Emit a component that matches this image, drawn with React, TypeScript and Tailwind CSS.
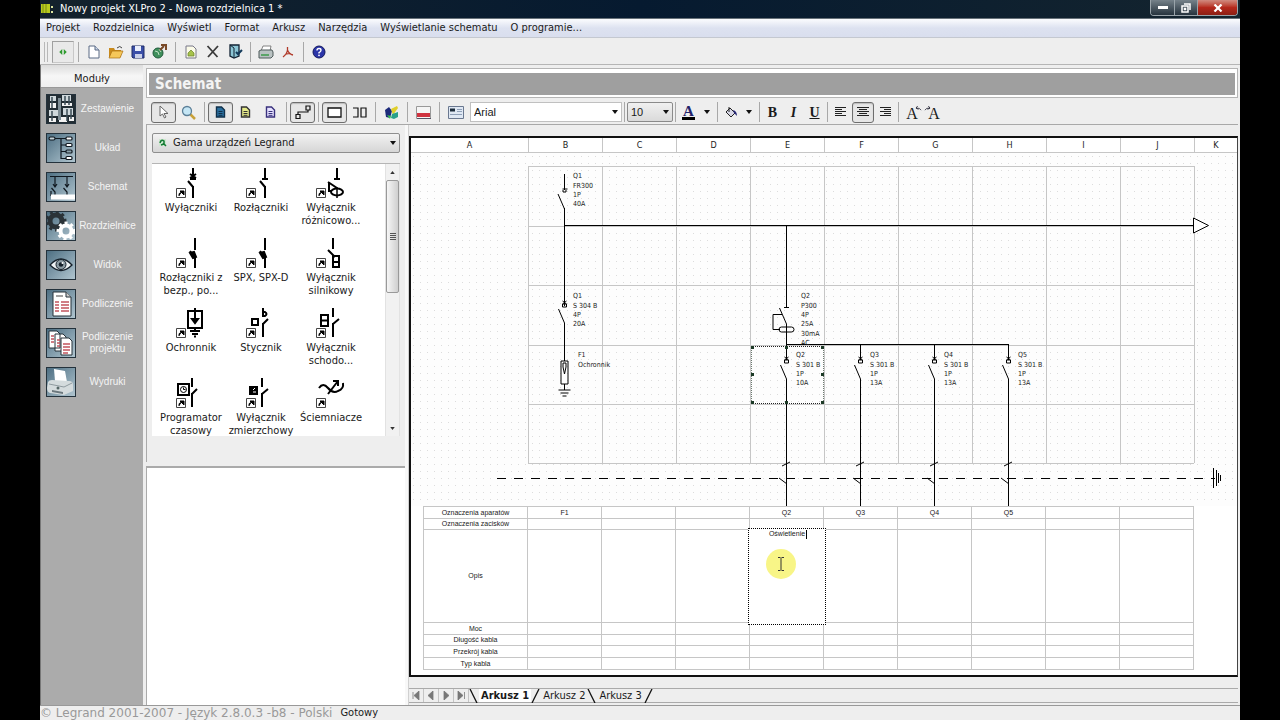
import React, { useState } from 'react';
import clsx from 'clsx';

const menuItems = [
  'Projekt',
  'Rozdzielnica',
  'Wyświetl',
  'Format',
  'Arkusz',
  'Narzędzia',
  'Wyświetlanie schematu',
  'O programie...',
];

const columns = ['B', 'C', 'D', 'E', 'F', 'G', 'H', 'I', 'J'];

// sheet geometry
const COL_START = 118;
const COL_W = 74;
const rowLines = [13, 73, 132, 192, 251, 310];
const labelOffsets = [0, 10, 19, 28, 38, 47];

type TableRow = {
  label: string;
  height: string;
  cells?: Record<string, string>;
};

const tableRows: TableRow[] = [
  { label: 'Oznaczenia aparatów', height: 'h-[12px]', cells: { B: 'F1', E: 'Q2', F: 'Q3', G: 'Q4', H: 'Q5' } },
  { label: 'Oznaczenia zacisków', height: 'h-[11px]' },
  { label: 'Opis', height: 'h-[93px]' },
  { label: 'Moc', height: 'h-[12px]' },
  { label: 'Długość kabla', height: 'h-[11px]' },
  { label: 'Przekrój kabla', height: 'h-[12px]' },
  { label: 'Typ kabla', height: 'h-[12px]' },
];

/* ---------- small helpers ---------- */

const Sep = ({ className = 'mx-[3px]' }: { className?: string }) => (
  <span className={clsx('h-5 w-px shrink-0 bg-[#a8a8a8]', className)} />
);

type ToolProps = {
  label: string;
  pressed?: boolean;
  width?: string;
  children: React.ReactNode;
};

const Tool = ({ label, pressed, width = 'w-[25px]', children }: ToolProps) => (
  <button
    aria-label={label}
    title={label}
    className={clsx(
      'flex h-[21px] shrink-0 items-center justify-center rounded-[3px] border',
      width,
      pressed ? 'border-[#6e6e6e] bg-[#e6e6e6] shadow-[inset_0_1px_1px_#bbb]' : 'border-transparent'
    )}
  >
    {children}
  </button>
);

const Arrow = () => (
  <svg width="6" height="4" viewBox="0 0 6 4" fill="#111">
    <path d="M0 0h6L3 4z" />
  </svg>
);

type SelectProps = {
  label: string;
  options: string[];
  width: string;
  className: string;
};

const SelectBox = ({ label, options, width, className }: SelectProps) => (
  <div className={clsx('relative flex shrink-0 items-center', width)}>
    <select aria-label={label} className={clsx('h-[20px] w-full appearance-none border outline-none', className)}>
      {options.map((o) => (
        <option key={o}>{o}</option>
      ))}
    </select>
    <span className="pointer-events-none absolute right-[4px]">
      <Arrow />
    </span>
  </div>
);

const PageIcon = ({ fill, stroke }: { fill: string; stroke: string }) => (
  <svg width="11" height="12" viewBox="0 0 11 12">
    <path d="M1.5 1h5l3 3v7h-8z" fill={fill} stroke={stroke} strokeWidth="1.4" />
    <path d="M3.5 5.5h4M3.5 7.5h4M3.5 9.3h4" stroke={stroke} />
  </svg>
);

const AlignIcon = ({ d }: { d: string }) => (
  <svg width="12" height="12" viewBox="0 0 12 12" stroke="#222" strokeWidth="1">
    <path d={d} />
  </svg>
);

/* ---------- module icons ---------- */

const moduleList = [
  {
    name: 'Zestawienie',
    icon: (
      <>
        <rect width="30" height="30" fill="#222d34" />
        <path d="M4 2h6v5H4zM16 1h9v6h-9zM3 16h9v6H3zM17 14h10v7H17z" fill="#cfd8dc" />
        <path d="M4 9h6v5H4zM16 9h10v3H16zM13 23h8v5h-8zM3 24h7v4H3zM23 23h5v4h-5z" fill="#f2f2f2" />
        <path d="M6 3v11M19 2v9M23 2v9M6 17v10M21 15v12M25 15v10" stroke="#3c4c55" strokeWidth="1.5" />
        <path d="M12 4h3v22h-3z" fill="#7e8d95" />
      </>
    ),
  },
  {
    name: 'Układ',
    icon: (
      <g fill="none" stroke="#101820" strokeWidth="1.2">
        <path d="M9 5.5h11M15 5.5v20h5M15 12h5M15 18.5h5" />
        <rect x="3" y="4" width="6" height="3" rx="1.5" fill="#c5d2d8" />
        <rect x="20" y="4" width="6" height="3" rx="1" fill="#fff" />
        <rect x="20" y="10.5" width="6" height="3" rx="1" fill="#fff" />
        <rect x="20" y="17" width="6" height="3" rx="1" fill="#8ca2ad" />
        <rect x="20" y="23.5" width="6" height="3" rx="1" fill="#fff" />
      </g>
    ),
  },
  {
    name: 'Schemat',
    icon: (
      <g fill="none" stroke="#101820" strokeWidth="1.2">
        <path d="M4 4.500h23M9 5v10M7 12l2 3 2-3M5.500 16l3.500 4v3M21 5v10M19 12l2 3 2-3M17.500 16l3.500 4v3M5 19v5" />
        <rect x="5" y="22.500" width="24" height="5" fill="#fff" stroke="none" />
      </g>
    ),
  },
  {
    name: 'Rozdzielnice',
    icon: (
      <>
        <circle cx="10" cy="10" r="6" fill="none" stroke="#2b3338" strokeWidth="5" />
        <circle cx="10" cy="10" r="9" fill="none" stroke="#2b3338" strokeWidth="3" strokeDasharray="3 3" />
        <circle cx="20" cy="20" r="5.500" fill="none" stroke="#fff" strokeWidth="4" />
        <circle cx="20" cy="20" r="8" fill="none" stroke="#fff" strokeWidth="3" strokeDasharray="3 3" />
      </>
    ),
  },
  {
    name: 'Widok',
    icon: (
      <>
        <path d="M4 15Q15 3 26 15Q15 26 4 15z" fill="#eef2f4" stroke="#15202a" strokeWidth="1.3" />
        <circle cx="15" cy="14.500" r="5" fill="#8b9aa2" stroke="#15202a" />
        <circle cx="15" cy="14.500" r="2.300" fill="#15202a" />
        <circle cx="16.500" cy="13" r="1" fill="#fff" />
      </>
    ),
  },
  {
    name: 'Podliczenie',
    icon: (
      <>
        <path d="M7 3h13l5 5v19H7z" fill="#fff" stroke="#26323a" />
        <path d="M20 3v5h5" fill="#ccc" stroke="#26323a" />
        <path d="M10 7h7" stroke="#444" />
        <path d="M9 13h4M15 13h8M9 16h4M15 16h8M9 19h4M15 19h8M9 22h4M15 22h8" stroke="#c2545e" strokeWidth="1.500" />
      </>
    ),
  },
  {
    name: 'Podliczenie projektu',
    icon: (
      <>
        <path d="M3 3h8l3 3v14H3zM9 6h8l3 3v14H9z" fill="#fff" stroke="#26323a" />
        <path d="M15 10h8l3 3v14H15z" fill="#fff" stroke="#26323a" />
        <path d="M5 8h3M5 11h3M5 14h3M11 12h3M11 15h3M11 18h3M17 16h7M17 19h7M17 22h7M17 25h5" stroke="#c2545e" strokeWidth="1.300" />
      </>
    ),
  },
  {
    name: 'Wydruki',
    icon: (
      <>
        <path d="M8 2l11 2 2 11-12-1z" fill="#fff" />
        <path d="M2 15q1-2 4-2l17 1q4 0 4 4v6l-9 4-14-2q-3-1-3-5z" fill="#d4dbdd" />
        <path d="M3 17l15 3 8-4" stroke="#8f9a9f" fill="none" />
        <path d="M6 23l11 2v2L6 25z" fill="#6b777d" />
        <circle cx="12" cy="21" r="1.500" fill="#566" />
      </>
    ),
  },
];

/* ---------- device library ---------- */

const library = [
  { name: 'Wyłączniki', art: <path d="M37 1v12M34 12h6M34 7l6 4M40 7l-6 4M32 14l5 6M37 19v12" /> },
  { name: 'Rozłączniki', art: <path d="M39 1v11M36 12h6M34 14l5 6M39 19v12" /> },
  {
    name: 'Wyłącznik różnicowo...',
    art: (
      <>
        <path d="M41 1v11M38 12h6M32 15l9 6M33 15v9h3" />
        <ellipse cx="41" cy="25" rx="6" ry="3.500" />
        <path d="M41 20v11" strokeWidth="1.500" />
      </>
    ),
  },
  {
    name: 'Rozłączniki z bezp., po...',
    art: (
      <>
        <path d="M39 1v12M34 14l5 7M39 20v11" />
        <path d="M34 16l4-1 2 5-3 1z" fill="#000" />
      </>
    ),
  },
  {
    name: 'SPX, SPX-D',
    art: (
      <>
        <path d="M39 1v12M34 14l5 7M39 20v11" />
        <path d="M34 16l4-1 2 5-3 1z" fill="#000" />
      </>
    ),
  },
  { name: 'Wyłącznik silnikowy', art: <path d="M37 1v11M32 13l7 7M37 19v11h6V19zM37 25h6" /> },
  {
    name: 'Ochronnik',
    art: (
      <>
        <path d="M32 4h14v17H32zM39 1v12M39 21v3M34 24h10M36 27h6M38 29.500h2" />
        <path d="M36 12h6l-3 4z" fill="#000" />
      </>
    ),
  },
  { name: 'Stycznik', art: <path d="M37 1v9M37 5h2q3 2 0 4h-2M42 12l-5 5M37 16v14M26 12h6v6h-6z" /> },
  { name: 'Wyłącznik schodo...', art: <path d="M37 1v9M43 12l-6 5M37 16v14M25 8h7v11h-7zM25 13.500h7" /> },
  {
    name: 'Programator czasowy',
    art: (
      <>
        <path d="M36 1v9M41 12l-5 5M36 16v14M22 7h11v11H22z" />
        <circle cx="27.500" cy="12.500" r="3" strokeWidth="1" />
        <path d="M27.500 10.500v2h2" strokeWidth="1" />
      </>
    ),
  },
  {
    name: 'Wyłącznik zmierzchowy',
    art: (
      <>
        <path d="M36 1v9M42 12l-6 5M36 16v14" />
        <path d="M24 10h7v7h-7z" fill="#000" />
        <path d="M27 13l2-2M27 15h3" stroke="#fff" strokeWidth="1" />
      </>
    ),
  },
  { name: 'Ściemniacze', art: <path d="M23 11q4-6 9 0t10 3q6-2 5-8M32 17l10-13M37 4h5v5" /> },
];

/* ---------- schematic symbols ---------- */

const Labels = ({ x, y, lines }: { x: number; y: number; lines: string[] }) => (
  <g fill="#222" stroke="none">
    {lines.map((line, i) => (
      <text key={i} x={x} y={y + labelOffsets[i]}>
        {line}
      </text>
    ))}
  </g>
);

// open blade with a small square contact on top of it
const Breaker = ({ x, y }: { x: number; y: number }) => (
  <g>
    <path d={`M${x - 2} ${y - 5}l4 3M${x + 2} ${y - 5}l-4 3M${x - 2} ${y - 2}h4v3h-4z`} fill="none" />
    <path d={`M${x - 6} ${y + 3}L${x} ${y + 17}`} />
  </g>
);

const feeders = [
  { x: 377, name: 'Q2', amps: '10A' },
  { x: 451, name: 'Q3', amps: '13A' },
  { x: 525, name: 'Q4', amps: '13A' },
  { x: 599, name: 'Q5', amps: '13A' },
];

const Schematic = () => (
  <svg
    width="828"
    height="353"
    viewBox="0 0 828 353"
    className="block shrink-0 font-['DejaVu_Sans_Condensed','Noto_Sans',sans-serif] text-[7px]"
    role="img"
    aria-label="Schemat rozdzielnicy"
  >
    <defs>
      <pattern id="dots" width="7" height="7" patternUnits="userSpaceOnUse">
        <rect x="3" y="3" width="1" height="1" fill="#dcdcdc" />
      </pattern>
    </defs>
    <rect width="828" height="353" fill="#fdfdfd" />
    <rect width="828" height="353" fill="url(#dots)" />

    {/* grid */}
    <g stroke="#c6c6c6" shapeRendering="crispEdges">
      {rowLines.map((y) => (
        <path key={y} d={`M118 ${y + 0.5}H784`} />
      ))}
      {[...columns, 'K'].map((c, i) => (
        <path key={c} d={`M${COL_START + i * COL_W + 0.5} 13V310`} />
      ))}
    </g>

    <g stroke="#000" fill="none">
      {/* main feed */}
      <g shapeRendering="crispEdges">
        <path d="M154.500 21v16M154.500 55v98M154.500 170v38M154.500 72.500H783" />
        <path d="M376.500 73v81M376.500 171v20M376.500 191.500H599" />
      </g>
      <path d="M152.500 36h5M153 37v2h3v-2M148 41l6.500 15" />
      <path d="M783.500 65v15l15-7.500z" fill="#fff" />
      <Breaker x={154.5} y={153} />

      {/* surge arrester */}
      <path d="M151 208h7v23h-7zM154.500 231v6M148.500 237h12M150.500 240h8M152.500 243h4M153 214v-4h3v4M153 214l1.500 7 1.500-7" />

      {/* residual current switch */}
      <path d="M374 154.500h5M369.500 155l7 16M372 161.500h-9v15h7" />
      <rect x="369" y="174" width="15" height="5" rx="2.500" />

      {feeders.map((f) => (
        <g key={f.x}>
          <path d={`M${f.x - 0.5} 191v16M${f.x - 0.5} 226v127`} shapeRendering="crispEdges" />
          <Breaker x={f.x - 0.5} y={209} />
          <path d={`M${f.x - 5} 313l8-4M${f.x - 8} 325l8 6`} />
        </g>
      ))}

      <path d="M87 325.500h718" strokeDasharray="9 8" shapeRendering="crispEdges" />
      <path d="M803.500 315v20M806.500 317v16M808.500 320v10M810.500 322v6" />
    </g>

    {/* selection frame */}
    <g fill="none" stroke="#222">
      <path d="M341 193.500h73M341 250.500h73" strokeDasharray="1 1" shapeRendering="crispEdges" />
      <path d="M341.500 193v58M413.500 193v58" stroke="#6d7a70" strokeDasharray="1 1" shapeRendering="crispEdges" />
      {[341, 375, 411].map((x) =>
        [193, 220, 248].map((y) =>
          x === 375 && y === 220 ? null : <rect key={`${x}-${y}`} x={x} y={y} width="3" height="3" fill="#1c3a26" stroke="none" />
        )
      )}
    </g>

    <Labels x={163} y={25} lines={['Q1', 'FR300', '1P', '40A']} />
    <Labels x={163} y={145} lines={['Q1', 'S 304 B', '4P', '20A']} />
    <Labels x={168} y={204} lines={['F1', 'Ochronnik']} />
    <Labels x={391} y={145} lines={['Q2', 'P300', '4P', '25A', '30mA', 'AC']} />
    {feeders.map((f) => (
      <Labels key={f.x} x={f.x + 9} y={204} lines={[f.name, 'S 301 B', '1P', f.amps]} />
    ))}
  </svg>
);

const DescriptionTable = () => {
  const [text, setText] = useState('Oświetlenie');

  return (
    <table className="ml-[13px] w-[770px] table-fixed border-collapse bg-white text-center font-['Liberation_Sans',Arial,sans-serif] text-[7px] leading-[8px] text-[#222]">
      <colgroup>
        <col className="w-[104px]" />
        {columns.map((c) => (
          <col key={c} className="w-[74px]" />
        ))}
      </colgroup>
      <tbody>
        {tableRows.map((row) => (
          <tr key={row.label} className={row.height}>
            <th scope="row" className="border border-[#c6c6c6] p-0 font-normal">
              {row.label}
            </th>
            {columns.map((c) => (
              <td key={c} className="relative border border-[#c6c6c6] p-0">
                {row.label === 'Opis' && c === 'E' ? (
                  <>
                    <textarea
                      aria-label="Opis E"
                      value={text}
                      spellCheck={false}
                      onChange={(e) => setText(e.target.value)}
                      className="absolute -inset-[2px] h-[97px] w-[78px] resize-none border border-dotted border-black bg-white pt-px text-center outline-none"
                    />
                    <span className="absolute left-1/2 top-0 ml-[19px] h-[9px] w-px bg-black" />
                  </>
                ) : (
                  row.cells?.[c]
                )}
              </td>
            ))}
          </tr>
        ))}
      </tbody>
    </table>
  );
};

/* ---------- toolbars ---------- */

const MainToolbar = () => {
  const w = 'w-[22px]';
  return (
    <div className="flex h-[27px] shrink-0 items-center border-b border-[#b5b5b5] bg-[#eeeeee] pl-1 pt-px">
      <span className="h-5 w-1 border-x border-[#b8b8b8]" />
      <span className="w-1" />
      <button
        aria-label="Moduły"
        className="flex h-[22px] w-[22px] items-center justify-center border border-[#c8c8c8] border-l-[#a0a0a0] border-t-[#a0a0a0] bg-[#e9e9e9]"
      >
        <svg width="8" height="6" viewBox="0 0 10 8" fill="#2f9b2f">
          <path d="M4 0v8L0 4zM6 0v8l4-4z" />
        </svg>
      </button>
      <Sep className="mx-1" />
      <Tool label="Nowy" width={w}>
        <svg width="12" height="14" viewBox="0 0 12 14">
          <path d="M1 1h6l4 4v8H1z" fill="#fff" stroke="#5b6b85" />
          <path d="M7 1v4h4" fill="#c9d4e6" stroke="#5b6b85" />
        </svg>
      </Tool>
      <Tool label="Otwórz" width={w}>
        <svg width="16" height="14" viewBox="0 0 16 14">
          <path d="M1 12V3h5l1 2h6v7z" fill="#c98a1c" />
          <path d="M1 13l3-7h11l-3 7z" fill="#f5c75a" stroke="#a86d10" strokeWidth="0.700" />
          <path d="M9 3q3-3 5 0" fill="none" stroke="#444" />
        </svg>
      </Tool>
      <Tool label="Zapisz" width={w}>
        <svg width="14" height="14" viewBox="0 0 14 14">
          <path d="M1 1h12v12H2l-1-1z" fill="#3b4fa8" stroke="#1f2c66" />
          <path d="M4 1h6v5H4z" fill="#e9eefb" />
          <path d="M4 9h7v4H4z" fill="#c9d0e8" />
        </svg>
      </Tool>
      <Tool label="Eksport" width={w}>
        <svg width="16" height="15" viewBox="0 0 16 15">
          <circle cx="6" cy="9" r="5" fill="#3f8f5b" stroke="#1f5a3a" />
          <path d="M3 7l3 1 1 3M7 5l2 3" stroke="#bfe0c4" fill="none" />
          <path d="M8 6l4-4M9 1h5v5" stroke="#7a4a28" strokeWidth="2" fill="none" />
        </svg>
      </Tool>
      <Sep className="mx-1" />
      <Tool label="Właściwości" width={w}>
        <svg width="12" height="14" viewBox="0 0 12 14">
          <path d="M1 1h7l3 3v9H1z" fill="#fbfbe8" stroke="#778" />
          <path d="M3 8l3-3 3 3v3H3z" fill="#a7c24a" stroke="#66802a" strokeWidth="0.700" />
        </svg>
      </Tool>
      <Tool label="Usuń" width={w}>
        <svg width="14" height="13" viewBox="0 0 14 13" stroke="#3a3a3a" strokeWidth="1.800">
          <path d="M1.500 1l10 11M12 1L2 12" />
        </svg>
      </Tool>
      <Tool label="Edytuj" width={w}>
        <svg width="15" height="15" viewBox="0 0 15 15">
          <path d="M2 1h9v11l-5 2-4-2z" fill="#8cc6d6" stroke="#123" strokeWidth="1.300" />
          <path d="M2 1l4 3v10" fill="none" stroke="#123" />
          <path d="M8 8l2 2 4-4" stroke="#123a5a" strokeWidth="2" fill="none" />
        </svg>
      </Tool>
      <Sep className="mx-1" />
      <Tool label="Drukuj" width={w}>
        <svg width="16" height="14" viewBox="0 0 16 14">
          <path d="M5 1h8l-1 5H3z" fill="#fff" stroke="#666" strokeWidth="0.800" />
          <path d="M1 6l2-1h11l1 2v4l-2 2H1z" fill="#b9c2c2" stroke="#4f5b5b" />
          <path d="M3 10h8" stroke="#3c9a4a" strokeWidth="1.500" />
        </svg>
      </Tool>
      <Tool label="PDF" width={w}>
        <svg width="12" height="12" viewBox="0 0 12 12" fill="none" stroke="#b03a2a" strokeWidth="1.300">
          <path d="M5.500 1v3Q5 8 1 11M5.500 4Q7 8 11 9M3 8.500q3-1.500 6-0.500" />
        </svg>
      </Tool>
      <Sep className="mx-1" />
      <Tool label="Pomoc" width={w}>
        <svg width="14" height="14" viewBox="0 0 14 14">
          <circle cx="7" cy="7" r="6" fill="#2b35a8" stroke="#11175c" />
          <path d="M5 5.500q0-2 2-2t2 1.700Q9 6.500 7 7.700v.8" fill="none" stroke="#fff" strokeWidth="1.400" />
          <circle cx="7" cy="10.300" r="0.900" fill="#fff" />
        </svg>
      </Tool>
    </div>
  );
};

const SchemaToolbar = () => {
  const small = 'w-[21px]';
  const align = 'w-[22px]';
  return (
    <div className="flex h-[25px] shrink-0 items-center border-b border-[#a8a8a8] pl-[5px]">
      <Tool label="Wskaźnik" pressed>
        <svg width="10" height="14" viewBox="0 0 10 14">
          <path d="M1 1v10l2.500-2 2 4 1.500-1-2-3.500H9z" fill="#fff" stroke="#666" />
        </svg>
      </Tool>
      <Tool label="Lupa">
        <svg width="15" height="15" viewBox="0 0 15 15">
          <path d="M9 9l5 5" stroke="#c8a13a" strokeWidth="2.500" />
          <circle cx="6" cy="6" r="4.500" fill="#c5e6f5" stroke="#5b7f98" strokeWidth="1.300" />
        </svg>
      </Tool>
      <Sep />
      <Tool label="Arkusz jednokreskowy" pressed>
        <PageIcon fill="#2b6f9e" stroke="#10304a" />
      </Tool>
      <Tool label="Arkusz wielokreskowy">
        <PageIcon fill="#e6eb8a" stroke="#333" />
      </Tool>
      <Tool label="Arkusz opisu">
        <PageIcon fill="#e6e2ff" stroke="#38307c" />
      </Tool>
      <Sep />
      <Tool label="Połączenie" pressed>
        <svg width="16" height="14" viewBox="0 0 16 14" fill="none" stroke="#111" strokeWidth="1.200">
          <path d="M1 9.500h4v4H1zM11 1h4v4h-4zM3 9V7h10V5" />
        </svg>
      </Tool>
      <Sep />
      <Tool label="Jedna strona" pressed>
        <svg width="15" height="11" viewBox="0 0 15 11" fill="#fff" stroke="#111" strokeWidth="1.300">
          <path d="M1 1h13v9H1z" />
        </svg>
      </Tool>
      <Tool label="Dwie strony">
        <svg width="15" height="11" viewBox="0 0 15 11" fill="none" stroke="#111" strokeWidth="1.200">
          <path d="M1 1h5v9H1M9 1h5v9H9z" />
        </svg>
      </Tool>
      <Sep />
      <Tool label="Kolory">
        <svg width="16" height="15" viewBox="0 0 16 15">
          <path d="M1 5l4-3 3 4-2 7-4-1z" fill="#1c2a7a" />
          <path d="M7 4l6-3 1 2-5 7z" fill="#e0cf2c" />
          <path d="M8 9l6-2v5l-4 2-3-1z" fill="#2aa08a" />
          <path d="M3 10l4 1-1 3z" fill="#3ac24a" />
        </svg>
      </Tool>
      <Sep />
      <Tool label="Ramka">
        <svg width="15" height="13" viewBox="0 0 15 13">
          <path d="M.5.5h14v12H.500z" fill="#f5f5f5" stroke="#999" />
          <path d="M1 7h13v4H1z" fill="#cf3340" />
          <path d="M1 12.500h14" stroke="#556" />
        </svg>
      </Tool>
      <Sep />
      <Tool label="Tabliczka">
        <svg width="16" height="13" viewBox="0 0 16 13">
          <path d="M.5.5h15v12H.500z" fill="#dfe8f4" stroke="#6a7890" />
          <path d="M2 2.500h5v3H2z" fill="#1c2c3c" />
          <path d="M9 3.500h5M9 5.500h5M2 8.500h12" stroke="#8fa0b8" />
        </svg>
      </Tool>
      <span className="w-0.5" />
      <SelectBox
        label="Czcionka"
        options={['Arial', 'Tahoma']}
        width="w-[152px]"
        className="border-[#c0c0c0] bg-white pl-[3px] font-['Liberation_Sans',Arial,sans-serif]"
      />
      <Sep className="mx-[2px]" />
      <SelectBox
        label="Rozmiar"
        options={['10', '12']}
        width="w-[46px]"
        className="rounded-[2px] border-[#8a8a8a] bg-linear-to-b from-[#f0f0f0] to-[#dadada] pl-[3px] font-['Liberation_Sans',Arial,sans-serif]"
      />
      <Sep className="mx-[2px]" />
      <Tool label="Kolor czcionki" width={small}>
        <span className="border-b-[3px] border-black px-px font-['Liberation_Serif',serif] text-[15px] font-bold leading-[12px] text-[#23236a]">A</span>
      </Tool>
      <Tool label="Wybierz kolor czcionki" width="w-[16px]">
        <Arrow />
      </Tool>
      <Sep className="mx-[2px]" />
      <Tool label="Wypełnienie" width={small}>
        <svg width="14" height="13" viewBox="0 0 14 13">
          <path d="M2 6l4-4 5 5-4 4z" fill="#d8d8e6" stroke="#222" />
          <path d="M5 1v5" stroke="#222" />
          <path d="M9 4q4 1 4 6-2-2-3-3z" fill="#2a2a78" />
        </svg>
      </Tool>
      <Tool label="Wybierz wypełnienie" width="w-[16px]">
        <Arrow />
      </Tool>
      <Sep className="mx-[2px]" />
      <Tool label="Pogrubienie" width={small}>
        <span className="font-['Liberation_Serif',serif] text-[14px] font-black">B</span>
      </Tool>
      <Tool label="Kursywa" width={small}>
        <span className="font-['Liberation_Serif',serif] text-[14px] font-bold italic">I</span>
      </Tool>
      <Tool label="Podkreślenie" width={small}>
        <span className="font-['Liberation_Serif',serif] text-[14px] font-bold underline">U</span>
      </Tool>
      <Sep className="mx-[2px]" />
      <Tool label="Do lewej" width={align}>
        <AlignIcon d="M0 1.500h11M0 3.500h7M0 5.500h11M0 7.500h7M0 9.500h11" />
      </Tool>
      <Tool label="Do środka" width={align} pressed>
        <AlignIcon d="M0 1.500h12M2 3.500h8M0 5.500h12M2 7.500h8M0 9.500h12" />
      </Tool>
      <Tool label="Do prawej" width={align}>
        <AlignIcon d="M1 1.500h11M5 3.500h7M1 5.500h11M5 7.500h7M1 9.500h11" />
      </Tool>
      <Sep className="mx-[2px]" />
      <Tool label="Obrót w lewo" width={align}>
        <span className="relative pt-1 font-['Liberation_Serif',serif] text-[16px] leading-[14px]">
          A
          <svg className="absolute -right-1 top-[3px]" width="7" height="5" viewBox="0 0 8 6" fill="none" stroke="#223">
            <path d="M7 5Q6 2 1 2.500M3 0L1 2.500 4 4" />
          </svg>
        </span>
      </Tool>
      <Tool label="Obrót w prawo" width={align}>
        <span className="relative pt-1 font-['Liberation_Serif',serif] text-[16px] leading-[14px]">
          A
          <svg className="absolute -left-1 top-[3px]" width="7" height="5" viewBox="0 0 8 6" fill="none" stroke="#223">
            <path d="M1 5Q2 2 7 2.500M5 0l2 2.500L4 4" />
          </svg>
        </span>
      </Tool>
    </div>
  );
};

/* ---------- panels ---------- */

const Modules = () => (
  <nav className="flex w-[103px] shrink-0 flex-col border-l border-[#777] bg-[#ababab]">
    <h2 className="flex h-[23px] items-center justify-center border-b border-[#999] bg-linear-to-b from-[#dcdcdc] via-[#f6f6f6] to-[#efefef] pt-[6px]">
      Moduły
    </h2>
    <ul className="flex flex-col gap-[9px] pl-[5px] pt-[6px]">
      {moduleList.map((m) => (
        <li key={m.name}>
          <button className="flex w-full items-center font-['Liberation_Sans',Arial,sans-serif] text-[10px] leading-[12px] text-[#f4f4f4]">
            <svg width="30" height="30" viewBox="0 0 30 30" className="shrink-0">
              <defs>
                <linearGradient id="module" x1="0" y1="0" x2="1" y2="1">
                  <stop offset="0" stopColor="#4a6c80" />
                  <stop offset="1" stopColor="#b4c8d2" />
                </linearGradient>
              </defs>
              <rect width="30" height="30" fill="url(#module)" />
              {m.icon}
              <rect x=".5" y=".5" width="29" height="29" fill="none" stroke="#24323c" />
            </svg>
            <span className="flex-1 pr-1 text-center">{m.name}</span>
          </button>
        </li>
      ))}
    </ul>
  </nav>
);

const Library = () => (
  <aside className="flex w-[259px] shrink-0 flex-col">
    <div className="h-[337px] shrink-0 border-l border-[#aaa] px-[5px] pt-2">
      <div className="relative">
        <SelectBox
          label="Gama urządzeń"
          options={['Gama urządzeń Legrand']}
          width="w-full"
          className="rounded-[2px] border-[#8e8e8e] bg-linear-to-b from-[#f2f2f2] to-[#d6d6d6] pl-[20px]"
        />
        <svg className="pointer-events-none absolute left-[7px] top-[6px]" width="8" height="8" viewBox="0 0 8 8">
          <path d="M0 0h7v7H0z" fill="#cfe8d0" />
          <path d="M1 4q1-4 4-2v3L2 6M4 4l3 3" fill="none" stroke="#137a34" strokeWidth="1.500" />
        </svg>
      </div>
      <div className="mt-[10px] flex h-[273px] overflow-hidden border-t border-[#b5b5b5] bg-white">
        <ul className="grid flex-1 auto-rows-[70px] grid-cols-[70px_70px_70px] pl-[4px] pt-[3px]">
          {library.map((item) => (
            <li key={item.name} className="flex flex-col items-center text-center leading-[13px]">
              <svg width="70" height="34" viewBox="0 0 70 34" className="shrink-0" fill="none" stroke="#000" strokeWidth="2">
                {item.art}
                <path d="M20.500 21.500h9v9h-9z" fill="#fff" stroke="#444" strokeWidth="1" />
                <path d="M23 29q-1-3 3-4M24 24h4v4z" fill="#000" strokeWidth="1" />
              </svg>
              <span className="w-[70px]">{item.name}</span>
            </li>
          ))}
        </ul>
        <div className="flex w-[15px] flex-col items-center border-x border-[#e2e2e2] bg-[#f1f1f1]">
          <button aria-label="W górę" className="flex h-4 items-center">
            <svg width="5" height="3" viewBox="0 0 6 4" fill="#333">
              <path d="M0 4h6L3 0z" />
            </svg>
          </button>
          <div className="flex h-[113px] w-full items-center justify-center rounded-[2px] border border-[#999] bg-linear-to-r from-[#f6f6f6] to-[#cfcfcf]">
            <svg width="6" height="7" viewBox="0 0 6 7" stroke="#555">
              <path d="M0 .5h6M0 2.500h6M0 4.500h6M0 6.500h6" />
            </svg>
          </div>
          <button aria-label="W dół" className="mt-auto flex h-4 items-center">
            <svg width="5" height="3" viewBox="0 0 6 4" fill="#333">
              <path d="M0 0h6L3 4z" />
            </svg>
          </button>
        </div>
      </div>
    </div>
    <div className="mt-1 flex-1 border-l border-t-2 border-[#aaa] bg-white" />
  </aside>
);

const Slant = ({ back }: { back?: boolean }) => (
  <svg width="10" height="14" viewBox="0 0 10 14" fill="none" stroke="#111" className="shrink-0">
    <path d={back ? 'M1 0l7 14' : 'M1 14L8 0'} strokeWidth="1.300" />
  </svg>
);

const SheetTabs = () => (
  <div className="flex h-[15px] shrink-0 items-center border-y border-[#aaa]">
    {['M1 1v7M7 0L2 4.500 7 9z', 'M6 0L1 4.500 6 9z', 'M2 0l5 4.500L2 9z', 'M1 0l5 4.500L1 9zM7.500 1v7'].map((d, i) => (
      <button
        key={d}
        aria-label={['Pierwszy', 'Poprzedni', 'Następny', 'Ostatni'][i]}
        className="flex h-full w-[15px] items-center justify-center border-r border-[#c4c4c4]"
      >
        <svg width="8" height="9" viewBox="0 0 8 9" fill="#777" stroke="#777" strokeWidth="0.800">
          <path d={d} />
        </svg>
      </button>
    ))}
    <Slant back />
    <button className="bg-white px-[2px] font-bold leading-[13px]">Arkusz 1</button>
    <Slant />
    <button className="px-[2px] leading-[13px]">Arkusz 2</button>
    <Slant back />
    <button className="px-[2px] leading-[13px]">Arkusz 3</button>
    <Slant />
  </div>
);

const Sheet = () => (
  <section className="flex min-w-0 flex-1 flex-col border-l border-[#d0d0d0] pb-[2px] pt-[11px]">
    <div className="relative min-h-0 flex-1 overflow-hidden border-b-2 border-l-2 border-r border-t-2 border-[#111] border-r-[#444] bg-white">
      <div className="grid h-[15px] grid-cols-[117px_repeat(9,74px)_1fr] border-b border-[#c6c6c6] text-center text-[9px] leading-[14px]">
        <span>A</span>
        {columns.map((c) => (
          <span key={c} className="border-l border-[#c6c6c6]">
            {c}
          </span>
        ))}
        <span className="border-l border-[#c6c6c6]">K</span>
      </div>
      <div className="-ml-px">
        <Schematic />
        <DescriptionTable />
      </div>
      {/* mouse highlight */}
      <div className="pointer-events-none absolute left-[355px] top-[411px] flex size-[30px] items-center justify-center rounded-full bg-[#f7f47a]/90">
        <svg width="8" height="16" viewBox="0 0 8 16" fill="none" stroke="#333">
          <path d="M1 1.500h2.500M4.500 1.500H7M4 2v12M1 14.500h2.500M4.500 14.500H7" />
        </svg>
      </div>
    </div>
    <div className="h-[11px] shrink-0" />
    <SheetTabs />
  </section>
);

const App = () => {
  return (
    <div className="flex h-screen flex-col overflow-hidden bg-black px-10 font-['DejaVu_Sans_Condensed','Noto_Sans',sans-serif] text-[11px] text-[#1a1a1a]">
      {/* title bar */}
      <header className="flex h-[19px] shrink-0 items-center border-b border-[#68727a] bg-linear-to-r from-[#14222c] via-[#061a30] to-[#14242e]">
        <svg width="14" height="14" viewBox="0 0 14 14" className="shrink-0">
          <path d="M1 2h9v9H1z" fill="#b9cc1e" />
          <path d="M3 2v9M6 2v9" stroke="#7b8a14" />
          <path d="M11 4h2v2h-2zM11 9h2v2h-2z" fill="#dfe6a0" />
        </svg>
        <h1 className="ml-[6px] text-white">Nowy projekt XLPro 2 - Nowa rozdzielnica 1 *</h1>
        <div className="ml-auto mr-[2px] flex h-[16px] self-start overflow-hidden rounded-b-[4px] border border-t-0 border-[#9aa4aa]">
          <button aria-label="Minimalizuj" className="flex w-[23px] items-center justify-center bg-linear-to-b from-[#76828a] to-[#27343e]">
            <svg width="10" height="4" viewBox="0 0 10 4">
              <path d="M0 0h10v3H0z" fill="#fff" />
            </svg>
          </button>
          <button aria-label="Przywróć" className="flex w-[24px] items-center justify-center border-x border-[#9aa4aa] bg-linear-to-b from-[#76828a] to-[#27343e]">
            <svg width="10" height="10" viewBox="0 0 10 10" fill="none" stroke="#fff" strokeWidth="1.500">
              <path d="M1 3h6v6H1zM3 1h6v6M3.500 5.500h1v1h-1z" />
            </svg>
          </button>
          <button aria-label="Zamknij" className="flex w-[39px] items-center justify-center bg-linear-to-b from-[#d08a80] via-[#b5281c] to-[#8c1f14]">
            <svg width="10" height="8" viewBox="0 0 10 8" stroke="#fff" strokeWidth="2.200">
              <path d="M1.500.5l7 7M8.500.5l-7 7" />
            </svg>
          </button>
        </div>
      </header>

      <div className="flex h-[19px] shrink-0 items-center gap-[13px] border-b border-[#c4c8d0] bg-linear-to-b from-[#fbfcfe] via-[#dde2f0] to-[#d9deee] pl-[6px]">
        {menuItems.map((item) => (
          <button key={item}>{item}</button>
        ))}
      </div>

      <MainToolbar />

      <main className="flex min-h-0 flex-1 bg-[#eeeeee]">
        <Modules />
        <div className="ml-[3px] mr-[2px] flex min-w-0 flex-1 flex-col">
          <div className="mt-[3px] shrink-0 border border-[#b5b5b5] bg-white px-[2px] pb-[2px] pt-[4px]">
            <h2 className="flex h-[22px] items-center bg-[#9f9f9f] pl-[6px] text-[15px] font-bold text-[#f4f4f4]">Schemat</h2>
          </div>
          <div className="h-[2px] shrink-0" />
          <SchemaToolbar />
          <div className="flex min-h-0 flex-1">
            <Library />
            <div className="w-[3px] shrink-0 bg-[#f8f8f8]" />
            <Sheet />
          </div>
        </div>
      </main>

      <footer className="flex h-[15px] shrink-0 gap-2 border-t border-[#999] bg-[#eeeeee] leading-[14px]">
        <span className="font-['DejaVu_Sans',sans-serif] text-[12px] text-[#999]">
          © Legrand 2001-2007 - Język 2.8.0.3 -b8 - Polski
        </span>
        <span>Gotowy</span>
      </footer>
    </div>
  );
};

export default App;
